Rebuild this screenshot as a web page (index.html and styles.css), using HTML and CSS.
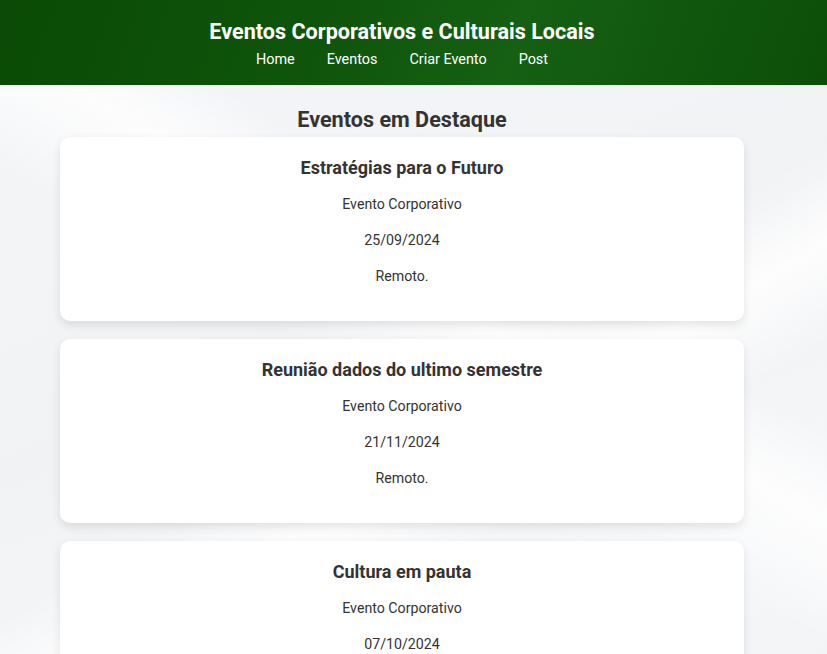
FILE: index.html
```html
<!DOCTYPE html>
<html lang="pt-BR">
<head>
<meta charset="utf-8">
<title>Eventos Corporativos e Culturais Locais</title>
<link rel="stylesheet" href="styles.css">
</head>
<body>
<header class="site-header">
  <h1 class="site-title">Eventos Corporativos e Culturais Locais</h1>
  <nav class="site-nav">
    <a href="#">Home</a>
    <a href="#">Eventos</a>
    <a href="#">Criar Evento</a>
    <a href="#">Post</a>
  </nav>
</header>
<main class="content">
  <h2 class="section-title">Eventos em Destaque</h2>
  <div class="event-list">
    <article class="event-card">
      <h3>Estratégias para o Futuro</h3>
      <p>Evento Corporativo</p>
      <p>25/09/2024</p>
      <p>Remoto.</p>
    </article>
    <article class="event-card">
      <h3>Reunião dados do ultimo semestre</h3>
      <p>Evento Corporativo</p>
      <p>21/11/2024</p>
      <p>Remoto.</p>
    </article>
    <article class="event-card">
      <h3>Cultura em pauta</h3>
      <p>Evento Corporativo</p>
      <p>07/10/2024</p>
      <p>Presencial.</p>
    </article>
  </div>
</main>
</body>
</html>
```
FILE: styles.css
```css
* { box-sizing: border-box; }
html, body { margin: 0; padding: 0; }
body {
  font-family: Roboto, "Liberation Sans", Arial, sans-serif;
  color: #333;
  min-height: 100vh;
  background-color: #f3f4f6;
  background-image:
    linear-gradient(150deg, rgba(255,255,255,0) 50%, rgba(255,255,255,0.85) 58%, rgba(255,255,255,0) 66%),
    linear-gradient(210deg, rgba(255,255,255,0) 35%, rgba(255,255,255,0.8) 42%, rgba(255,255,255,0) 52%),
    linear-gradient(160deg, #f5f6f8 0%, #f1f2f4 45%, #f6f7f9 75%, #f2f3f5 100%);
}
.site-header {
  background: linear-gradient(110deg, #0a4a06 0%, #0f550b 40%, #156013 62%, #0c4e08 100%);
  padding: 19px 23px 17px 0;
  text-align: center;
  color: #fff;
}
.site-title {
  margin: 0 0 7px;
  font-size: 21.6px;
  line-height: 26px;
  font-weight: 700;
}
.site-nav {
  display: flex;
  justify-content: center;
  gap: 32px;
  line-height: 16px;
}
.site-nav a {
  color: #fff;
  text-decoration: none;
  font-size: 14.4px;
}
.content {
  padding: 0 23px 40px 0;
}
.section-title {
  margin: 22px 0 4px;
  text-align: center;
  font-size: 21.6px;
  line-height: 26px;
  font-weight: 700;
  color: #333;
}
.event-list {
  display: flex;
  flex-direction: column;
  gap: 18px;
  margin: 0 60px;
}
.event-card {
  background: #fff;
  border-radius: 10px;
  box-shadow: 0 4px 10px rgba(0,0,0,0.1);
  padding: 20px 20px 20px;
  text-align: center;
}
.event-card h3 {
  margin: 0;
  font-size: 18px;
  line-height: 22px;
  font-weight: 700;
  color: #333;
}
.event-card p {
  margin: 14px 0 0;
  font-size: 14.2px;
  line-height: 22px;
  color: #333;
}
.event-card p:last-child { margin-bottom: 14px; }
```
